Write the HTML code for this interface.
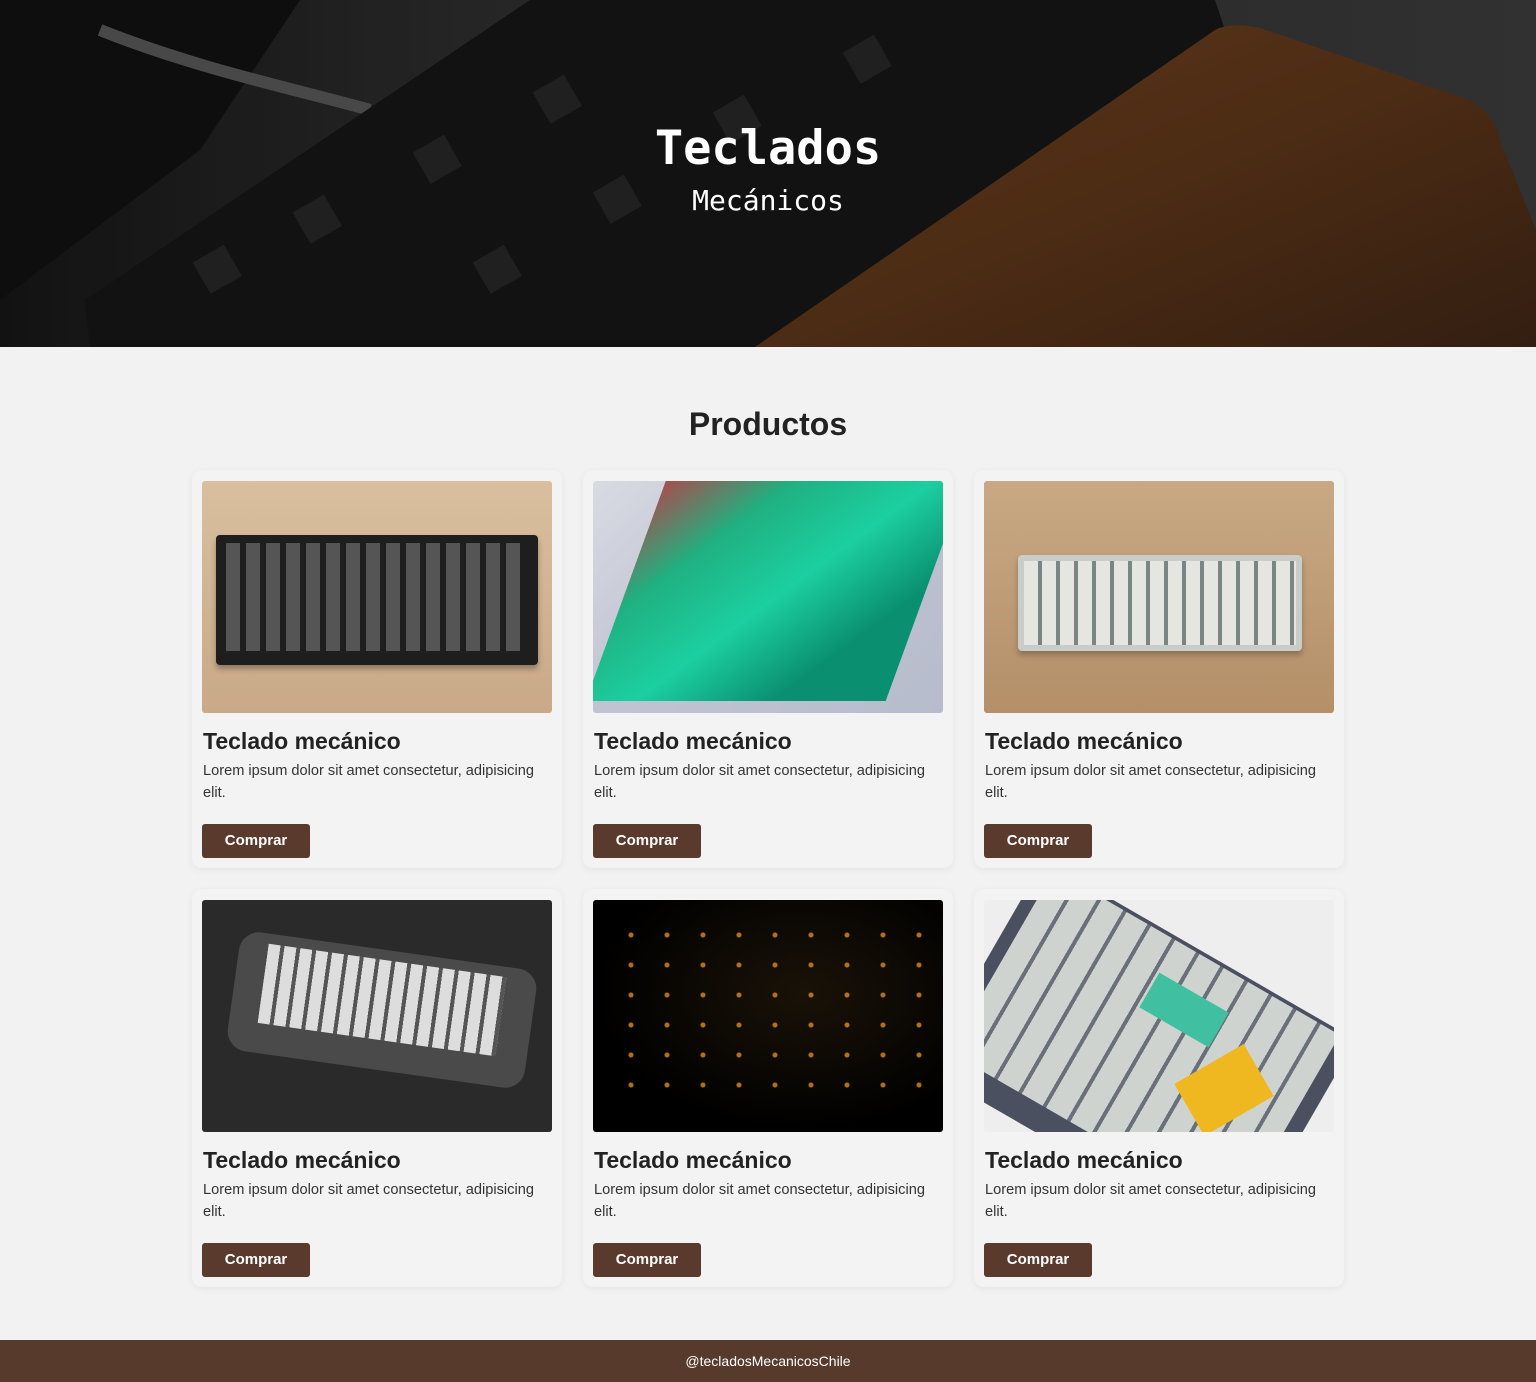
<!DOCTYPE html>
<html><head><meta charset="utf-8"><style>
*{margin:0;padding:0;box-sizing:border-box}
body{width:1536px;height:1382px;background:#f2f2f2;font-family:"Liberation Sans",sans-serif;color:#222;position:relative;overflow:hidden}
.hero{position:absolute;left:0;top:0;width:1536px;height:347px;overflow:hidden}
.hero svg{position:absolute;left:0;top:0}
.t1{position:absolute;left:0;width:1536px;text-align:center;color:#fff;font-family:"DejaVu Sans Mono","Liberation Mono",monospace}
h2{position:absolute;top:406px;left:0;width:1536px;text-align:center;font-size:32px;font-weight:bold;color:#222}
.card{position:absolute;width:370px;height:398px;background:#f3f3f3;border-radius:10px;box-shadow:0 2px 8px rgba(0,0,0,.06)}
.img{position:absolute;left:10px;top:11px;width:350px;height:232px;border-radius:3px;overflow:hidden}
.card h3{position:absolute;left:11px;top:258px;font-size:23px;font-weight:bold;color:#222}
.card p{position:absolute;left:11px;top:290px;width:350px;font-size:14.6px;line-height:22px;color:#333}
.btn{position:absolute;left:10px;top:354px;width:108px;height:34px;background:#5a3a2c;border-radius:3px;color:#fff;font-weight:bold;font-size:15px;text-align:center;line-height:34px}
footer{position:absolute;left:0;top:1340px;width:1536px;height:42px;background:#573a2c;color:#fff;text-align:center;font-size:14px;line-height:42px}
</style></head><body>
<div class="hero">
<svg width="1536" height="347">
<defs><linearGradient id="w" x1="0" y1="0" x2="1" y2="1"><stop offset="0" stop-color="#6e4020"/><stop offset=".5" stop-color="#5a3418"/><stop offset="1" stop-color="#3d2415"/></linearGradient>
<linearGradient id="bg" x1="0" y1="0" x2="1" y2="0"><stop offset="0" stop-color="#161616"/><stop offset=".3" stop-color="#2c2c2c"/><stop offset="1" stop-color="#3a3a3a"/></linearGradient></defs>
<rect width="1536" height="347" fill="url(#bg)"/>
<path d="M0 0H300L200 150L0 300Z" fill="#111"/>
<path d="M100 30C200 70 300 90 370 110" stroke="#555" stroke-width="12" fill="none"/>
<path d="M85 300L530 0H1215L1225 30L770 347H90Z" fill="#161616"/>
<path d="M1215 30Q1230 22 1260 28L1470 100Q1495 115 1500 140L1536 230V347H755Z" fill="url(#w)"/>
<g fill="#262626">
<rect x="200" y="250" width="36" height="36" transform="rotate(-30 220 270)"/>
<rect x="300" y="200" width="36" height="36" transform="rotate(-30 320 220)"/>
<rect x="420" y="140" width="36" height="36" transform="rotate(-30 440 160)"/>
<rect x="540" y="80" width="36" height="36" transform="rotate(-30 560 100)"/>
<rect x="480" y="250" width="36" height="36" transform="rotate(-30 500 270)"/>
<rect x="600" y="180" width="36" height="36" transform="rotate(-30 620 200)"/>
<rect x="720" y="100" width="36" height="36" transform="rotate(-30 740 120)"/>
<rect x="850" y="40" width="36" height="36" transform="rotate(-30 870 60)"/>
</g>
<rect width="1536" height="347" fill="rgba(0,0,0,.15)"/>
</svg>
<div class="t1" style="top:121px;font-size:47px;font-weight:bold">Teclados</div>
<div class="t1" style="top:184px;font-size:28px">Mecánicos</div>
</div>
<h2>Productos</h2>

<div class="card" style="left:192px;top:470px"><div class="img" style="background:linear-gradient(#d9bf9e,#c9a987)"><div style="position:absolute;left:14px;top:54px;width:322px;height:130px;background:#1e1e1e;border-radius:4px;box-shadow:0 4px 6px rgba(0,0,0,.3)"></div><div style="position:absolute;left:24px;top:62px;width:300px;height:108px;background:repeating-linear-gradient(90deg,#555 0 14px,#1e1e1e 14px 20px)"></div></div><h3>Teclado mecánico</h3><p>Lorem ipsum dolor sit amet consectetur, adipisicing elit.</p><div class="btn">Comprar</div></div>

<div class="card" style="left:583px;top:470px"><div class="img" style="background:linear-gradient(135deg,#d9dbe3 0,#c0c4d2 40%,#b7bccc 100%)"><div style="position:absolute;left:40px;top:-40px;width:300px;height:260px;background:linear-gradient(135deg,#d03040 0,#20b080 30%,#1ccfa0 55%,#0a8f70 80%);transform:skewX(-20deg)"></div></div><h3>Teclado mecánico</h3><p>Lorem ipsum dolor sit amet consectetur, adipisicing elit.</p><div class="btn">Comprar</div></div>

<div class="card" style="left:974px;top:470px"><div class="img" style="background:linear-gradient(#c8a984,#b48f68)"><div style="position:absolute;left:34px;top:74px;width:284px;height:96px;background:#c9ccc8;border-radius:4px;box-shadow:0 4px 6px rgba(0,0,0,.25)"></div><div style="position:absolute;left:40px;top:80px;width:272px;height:84px;background:repeating-linear-gradient(90deg,#e5e5e2 0 14px,#7a8584 14px 18px)"></div></div><h3>Teclado mecánico</h3><p>Lorem ipsum dolor sit amet consectetur, adipisicing elit.</p><div class="btn">Comprar</div></div>

<div class="card" style="left:192px;top:889px"><div class="img" style="background:#2a2a2a"><div style="position:absolute;left:30px;top:50px;width:300px;height:120px;background:#4a4a4a;border-radius:20px;transform:rotate(8deg)"></div><div style="position:absolute;left:60px;top:60px;width:240px;height:80px;background:repeating-linear-gradient(90deg,#ddd 0 12px,#555 12px 16px);transform:rotate(8deg)"></div></div><h3>Teclado mecánico</h3><p>Lorem ipsum dolor sit amet consectetur, adipisicing elit.</p><div class="btn">Comprar</div></div>

<div class="card" style="left:583px;top:889px"><div class="img" style="background:radial-gradient(ellipse at 60% 40%,#1a1208,#000 70%)"><div style="position:absolute;left:20px;top:20px;width:330px;height:180px;background:radial-gradient(circle,#e08a1a 0 2px,transparent 3px) 0 0/36px 30px;opacity:.8"></div></div><h3>Teclado mecánico</h3><p>Lorem ipsum dolor sit amet consectetur, adipisicing elit.</p><div class="btn">Comprar</div></div>

<div class="card" style="left:974px;top:889px"><div class="img" style="background:#eeeeee"><div style="position:absolute;left:60px;top:-40px;width:360px;height:240px;background:#4a5060;transform:rotate(30deg);transform-origin:0 0"></div><div style="position:absolute;left:70px;top:-30px;width:330px;height:210px;background:repeating-linear-gradient(90deg,#cfd3d0 0 24px,#6a707a 24px 28px);transform:rotate(30deg);transform-origin:0 0"></div><div style="position:absolute;left:200px;top:160px;width:80px;height:60px;background:#f0b820;transform:rotate(-30deg)"></div><div style="position:absolute;left:160px;top:90px;width:80px;height:40px;background:#40c0a0;transform:rotate(30deg)"></div></div><h3>Teclado mecánico</h3><p>Lorem ipsum dolor sit amet consectetur, adipisicing elit.</p><div class="btn">Comprar</div></div>

<footer>@tecladosMecanicosChile</footer>
</body></html>
